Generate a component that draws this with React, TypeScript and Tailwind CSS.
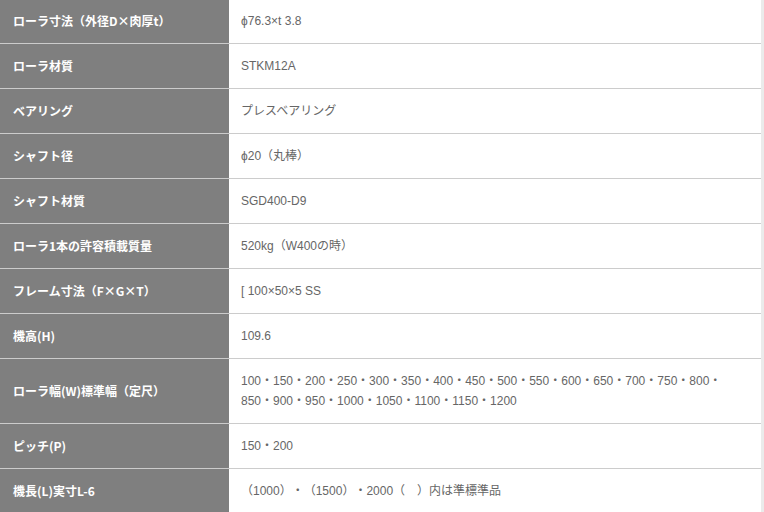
const rows: { label: string; value: string[] }[] = [
  { label: 'ローラ寸法（外径D×肉厚t）', value: ['ϕ76.3×t 3.8'] },
  { label: 'ローラ材質', value: ['STKM12A'] },
  { label: 'ベアリング', value: ['プレスベアリング'] },
  { label: 'シャフト径', value: ['ϕ20（丸棒）'] },
  { label: 'シャフト材質', value: ['SGD400-D9'] },
  { label: 'ローラ1本の許容積載質量', value: ['520kg（W400の時）'] },
  { label: 'フレーム寸法（F×G×T）', value: ['[ 100×50×5 SS'] },
  { label: '機高(H)', value: ['109.6'] },
  {
    label: 'ローラ幅(W)標準幅（定尺）',
    value: [
      '100・150・200・250・300・350・400・450・500・550・600・650・700・750・800・',
      '850・900・950・1000・1050・1100・1150・1200',
    ],
  },
  { label: 'ピッチ(P)', value: ['150・200'] },
  { label: '機長(L)実寸L-6', value: ['（1000）・（1500）・2000（　）内は準標準品'] },
];

export default function App() {
  return (
    <div className="flex w-[764px] h-[512px] overflow-hidden bg-white font-['Noto_Sans_CJK_JP',sans-serif] text-[12px] leading-5 [text-spacing-trim:space-all]">
      <div className="w-[761px] -mt-[1px]">
        {rows.map((row) => (
          <div key={row.label} className="flex border-b border-[#cccccc]">
            <div className="w-[229px] shrink-0 bg-[#7f7f7f] px-[13px] py-3 font-bold text-white flex items-center">
              {row.label}
            </div>
            <div className="flex-1 px-3 py-3 text-[#666666] flex flex-col justify-center font-['Liberation_Sans','Noto_Sans_CJK_JP',sans-serif] whitespace-pre">
              {row.value.map((line) => (
                <div key={line}>{line}</div>
              ))}
            </div>
          </div>
        ))}
      </div>
      <div className="flex-1 bg-[#ebebeb]" />
    </div>
  );
}
